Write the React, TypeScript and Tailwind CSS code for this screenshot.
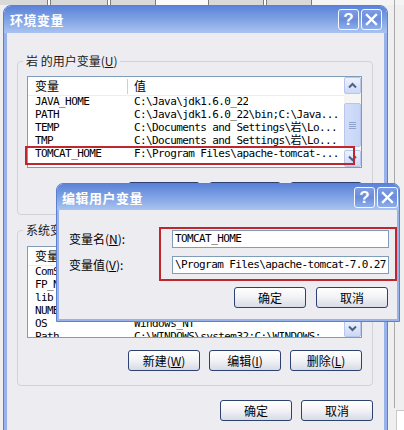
import React from "react";

const ui = "font-['Noto_Sans_CJK_SC','Liberation_Sans',sans-serif]";
const mono = "font-['DejaVu_Sans_Mono','Noto_Sans_CJK_SC',monospace] text-[11px] tracking-[-0.6px]";

function XpButton({ children }: { children: React.ReactNode }) {
  return (
    <div className="w-[72px] h-[21px] shrink-0 rounded-[3px] border border-[#2d4270] bg-[linear-gradient(to_bottom,#ffffff,#f4f4f7_45%,#d8dbe6)] flex items-center justify-center text-[12px] leading-none text-black">
      {children}
    </div>
  );
}

function CapButtons() {
  return (
    <div className="flex gap-[2px]">
      <div className="w-[21px] h-[21px] rounded-[3px] border border-[#f4f8ff] bg-[linear-gradient(to_bottom,#7d9de3,#6a8cdb_50%,#8eaeea)] flex items-center justify-center text-white font-bold text-[17px] leading-none font-['Liberation_Sans',sans-serif]">
        ?
      </div>
      <div className="w-[21px] h-[21px] rounded-[3px] border border-[#f4f8ff] bg-[linear-gradient(to_bottom,#7d9de3,#6a8cdb_50%,#8eaeea)] flex items-center justify-center">
        <svg width="13" height="13" viewBox="0 0 13 13">
          <path d="M2 2 L11 11 M11 2 L2 11" stroke="white" strokeWidth="2.4" strokeLinecap="square" />
        </svg>
      </div>
    </div>
  );
}

function TitleBar({ title, h, pl, pr }: { title: string; h: string; pl: string; pr: string }) {
  return (
    <div className={`${h} ${pl} ${pr} flex items-center justify-between bg-[linear-gradient(to_bottom,#5c82d8,#7c9fe3_45%,#a9c4f0)]`}>
      <span className="text-white font-bold text-[13px] leading-none tracking-[0.5px]">{title}</span>
      <CapButtons />
    </div>
  );
}

function Arrow({ up }: { up?: boolean }) {
  return (
    <svg width="9" height="7" viewBox="0 0 9 7">
      <path d={up ? "M1 5.5 L4.5 2 L8 5.5" : "M1 1.5 L4.5 5 L8 1.5"} fill="none" stroke="#4d6185" strokeWidth="2" />
    </svg>
  );
}

function ScrollBtn({ up }: { up?: boolean }) {
  return (
    <div className="h-[17px] shrink-0 rounded-[2px] border border-[#b7c6ea] bg-[linear-gradient(to_bottom,#eef2fd,#cbd8f7)] flex items-center justify-center">
      <Arrow up={up} />
    </div>
  );
}

function Scrollbar() {
  return (
    <div className="w-[17px] shrink-0 bg-[#f5f5f3] flex flex-col">
      <ScrollBtn up />
      <div className="h-[9px] shrink-0" />
      <div className="h-[44px] shrink-0 rounded-[2px] border border-[#b7c6ea] bg-[linear-gradient(to_right,#d3def8,#c6d5f7)] flex flex-col items-center justify-center gap-[1px]">
        <div className="w-[7px] h-px bg-[#8ea3cf]" />
        <div className="w-[7px] h-px bg-[#8ea3cf]" />
        <div className="w-[7px] h-px bg-[#8ea3cf]" />
        <div className="w-[7px] h-px bg-[#8ea3cf]" />
      </div>
      <div className="flex-1" />
      <ScrollBtn />
    </div>
  );
}

function ListView({ rows }: { rows: [string, string][] }) {
  return (
    <div className="h-[92px] border border-[#7f9db9] bg-white flex overflow-hidden">
      <div className="flex-1 min-w-0 flex flex-col">
        <div className="h-[19px] shrink-0 flex items-center border-b border-[#efeee9]">
          <div className="w-[99px] pl-[7px] text-[12px] leading-none">变量</div>
          <div className="w-px h-[15px] bg-[#cfcfcf]" />
          <div className="pl-[6px] text-[12px] leading-none">值</div>
        </div>
        {rows.map(([n, v], i) => (
          <div key={i} className={`h-[13px] shrink-0 flex items-center ${mono} text-black`}>
            <div className="w-[99px] pl-[7px] whitespace-nowrap overflow-hidden">{n}</div>
            <div className="w-px" />
            <div className="pl-[6px] whitespace-nowrap overflow-hidden">{v}</div>
          </div>
        ))}
      </div>
      <Scrollbar />
    </div>
  );
}

const userRows: [string, string][] = [
  ["JAVA_HOME", "C:\\Java\\jdk1.6.0_22"],
  ["PATH", "C:\\Java\\jdk1.6.0_22\\bin;C:\\Java..."],
  ["TEMP", "C:\\Documents and Settings\\岩\\Lo..."],
  ["TMP", "C:\\Documents and Settings\\岩\\Lo..."],
  ["TOMCAT_HOME", "F:\\Program Files\\apache-tomcat-..."],
];

const sysRows: [string, string][] = [
  ["ComSpec", "C:\\WINDOWS\\system32\\cmd.exe"],
  ["FP_NO_HOST_CHECK", "NO"],
  ["lib", "C:\\Java\\jdk1.6.0_22\\lib"],
  ["NUMBER_OF_PROCESSORS", "2"],
  ["OS", "Windows_NT"],
  ["Path", "C:\\WINDOWS\\system32;C:\\WINDOWS;..."],
];

function Group({ legend, rows, buttons, mt, pt, btnMt, pb }: { legend: React.ReactNode; rows: [string, string][]; buttons: React.ReactNode[]; mt: string; pt: string; btnMt: string; pb: string }) {
  return (
    <fieldset className={`${mt} border border-[#d3d2d8] rounded-[4px]`}>
      <legend className="ml-[5px] px-[3px] text-[12px] leading-[16px] text-[#1a1a1a]">{legend}</legend>
      <div className={`pl-[9px] pr-[10px] ${pt} ${pb}`}>
        <ListView rows={rows} />
        <div className={`${btnMt} flex justify-end gap-[9px]`}>
          {buttons.map((b, i) => (
            <XpButton key={i}>{b}</XpButton>
          ))}
        </div>
      </div>
    </fieldset>
  );
}

export default function App() {
  return (
    <div className={`relative w-[404px] h-[430px] overflow-hidden bg-[#efefef] ${ui}`}>
      {/* tabs of a window behind */}
      <div className="h-[5px] flex">
        <div className="w-[48px] bg-[#d9d9d9] border-r border-[#7c7c7c]" />
        <div className="w-[2px] bg-white" />
        <div className="w-[58px] bg-[#d9d9d9] border-x border-[#7c7c7c]" />
        <div className="w-[2px] bg-white" />
        <div className="w-[46px] bg-[#d9d9d9] border-x border-[#7c7c7c]" />
        <div className="w-[52px] bg-[#fafafa]" />
        <div className="w-[56px] bg-[#d9d9d9] border-x border-[#7c7c7c]" />
        <div className="w-[2px] bg-white" />
        <div className="w-[46px] bg-[#d9d9d9] border-x border-[#7c7c7c]" />
        <div className="flex-1 bg-[#f4f4f4]" />
      </div>

      {/* desktop decorations right of main window */}
      <div className="absolute left-[394px] top-0 h-[408px] w-px bg-[#a9a9a9]" />
      <div className="absolute left-[396px] top-[410px] right-0 bottom-0 bg-white border-t border-l border-[#c9c9c9]" />

      {/* main window */}
      <div className="ml-[3px] w-[385px] border border-[#5b7fd2] rounded-t-[8px] overflow-hidden">
        <TitleBar title="环境变量" h="h-[27px]" pl="pl-[6px]" pr="pr-[5px]" />
        <div className="border-x-[3px] border-[#98b3ec] bg-[#edecf1] pl-[10px] pr-[11px] pt-[20px] pb-[20px]">
          <Group
            legend={<>岩 的用户变量(<u>U</u>)</>}
            rows={userRows}
            mt="mt-0"
            pt="pt-[7px]"
            btnMt="mt-[14px]"
            pb="pb-[11px]"
            buttons={[<>新建(<u>N</u>)</>, <>编辑(<u>E</u>)</>, <>删除(<u>D</u>)</>]}
          />
          <Group
            legend={<>系统变量(<u>S</u>)</>}
            rows={sysRows}
            mt="mt-[7px]"
            pt="pt-[8px]"
            btnMt="mt-[12px]"
            pb="pb-[14px]"
            buttons={[<>新建(<u>W</u>)</>, <>编辑(<u>I</u>)</>, <>删除(<u>L</u>)</>]}
          />
          <div className="mt-[14px] flex justify-end gap-[9px]">
            <XpButton>确定</XpButton>
            <XpButton>取消</XpButton>
          </div>
        </div>
      </div>

      {/* red highlight on TOMCAT_HOME row */}
      <div className="absolute left-[25px] top-[146px] w-[330px] h-[19px] border-2 border-[#c0262d]" />

      {/* edit dialog */}
      <div className="absolute left-[56px] top-[183px] w-[344px] h-[139px] border border-[#5b7fd2] rounded-t-[7px] overflow-hidden flex flex-col">
        <TitleBar title="编辑用户变量" h="h-[26px]" pl="pl-[5px]" pr="pr-[1px]" />
        <div className="flex-1 border-x-[2px] border-b-[2px] border-[#98b3ec] bg-[#edecf1] pl-[10px] pr-[8px] pt-[20px] pb-[11px]">
          <div className="grid grid-cols-[103px_1fr] gap-y-[8px] items-center">
            <div className="text-[12px] leading-none">变量名(<u>N</u>):</div>
            <div className={`h-[18px] border border-[#7f9db9] bg-white pl-[2px] flex items-center whitespace-nowrap overflow-hidden ${mono}`}>TOMCAT_HOME</div>
            <div className="text-[12px] leading-none">变量值(<u>V</u>):</div>
            <div className={`h-[18px] border border-[#7f9db9] bg-white pl-[2px] flex items-center whitespace-nowrap overflow-hidden ${mono}`}>{"\\Program Files\\apache-tomcat-7.0.27"}</div>
          </div>
          <div className="mt-[13px] mr-[1px] flex justify-end gap-[10px]">
            <XpButton>确定</XpButton>
            <XpButton>取消</XpButton>
          </div>
        </div>
        <div className="absolute left-[102px] top-[43px] w-[238px] h-[54px] border-2 border-[#c0262d]" />
      </div>
    </div>
  );
}
